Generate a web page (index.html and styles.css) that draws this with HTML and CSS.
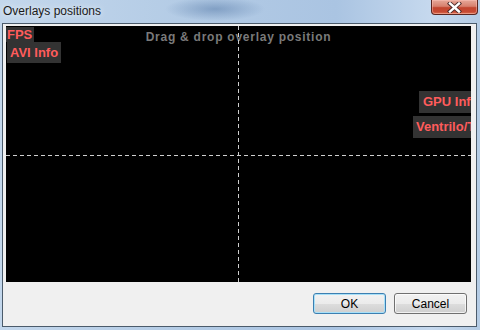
FILE: index.html
```html
<!DOCTYPE html>
<html lang="en">
  <head>
    <meta charset="UTF-8" />
    <title>Overlays positions</title>
    <link rel="stylesheet" href="styles.css">
  </head>
  <body>
    <div class="window">
      <div class="titlebar">
        <span class="title">Overlays positions</span>
        <button class="close">
          <svg width="17" height="11" viewBox="0 0 17 11">
            <path d="M4 1.5 L13 9.5 M13 1.5 L4 9.5" stroke="#4a2a2a" stroke-width="4.2" stroke-linecap="square" />
            <path d="M4 1.5 L13 9.5 M13 1.5 L4 9.5" stroke="#fff" stroke-width="2.4" stroke-linecap="square" />
          </svg>
        </button>
      </div>
      <div class="client">
        <div class="canvas">
          <div class="hint">Drag &amp; drop overlay position</div>
          <div class="axis axis-v"></div>
          <div class="axis axis-h"></div>
          <div class="overlay fps">FPS</div>
          <div class="overlay avi">AVI Info</div>
          <div class="overlay gpu">GPU Info</div>
          <div class="overlay vent">Ventrilo/TS</div>
        </div>
        <div class="buttons">
          <button class="btn default">OK</button>
          <button class="btn">Cancel</button>
        </div>
      </div>
    </div>
  </body>
</html>
```

FILE: styles.css
```css
html,
body {
  padding: 0;
  margin: 0;
  width: 480px;
  height: 330px;
  overflow: hidden;
}

.window {
  width: 480px;
  height: 330px;
  background:
    radial-gradient(ellipse 50px 12px at 215px 9px, rgba(90, 125, 170, 0.55), transparent),
    linear-gradient(to right, #c3d7ec 0%, #b3cbe5 40%, #aac4e2 70%, #c6d9ee 90%, #b4cbe4 100%);
  display: flex;
  flex-direction: column;
  font-family: "Liberation Sans", Arial, sans-serif;
}

.titlebar {
  height: 23px;
  display: flex;
  align-items: flex-start;
}

.title {
  padding: 4px 0 0 3px;
  font-size: 12px;
  line-height: 14px;
  color: #1a1a1a;
  text-shadow: 0 0 6px rgba(255, 255, 255, 0.9);
}

.close {
  margin-left: auto;
  margin-right: 2px;
  width: 47px;
  height: 15px;
  padding: 0;
  border: 1px solid #5a2620;
  border-top: none;
  border-radius: 0 0 4px 4px;
  background: linear-gradient(#e6a899 0%, #d7806e 45%, #c2452f 55%, #c74a33 85%, #e07a58 100%);
  box-shadow: inset 0 0 0 1px rgba(255, 200, 190, 0.45);
  display: flex;
  align-items: center;
  justify-content: center;
}

.client {
  margin: 0 3px 3px 2px;
  height: 302px;
  border: 1px solid #4b5b6b;
  background: #f0f0f0;
  display: flex;
  flex-direction: column;
}

.canvas {
  position: relative;
  margin: 2px 5px 0 3px;
  height: 256px;
  background: #000;
  overflow: hidden;
}

.hint {
  padding-top: 3px;
  text-align: center;
  font-size: 12px;
  font-weight: bold;
  letter-spacing: 0.75px;
  line-height: 16px;
  color: #7a7a7a;
}

.axis {
  position: absolute;
}

.axis-v {
  left: 232px;
  top: 0;
  bottom: 0;
  width: 1px;
  background: repeating-linear-gradient(to bottom, #cfcfcf 0 4px, transparent 4px 7px);
}

.axis-h {
  top: 129px;
  left: 0;
  right: 0;
  height: 1px;
  background: repeating-linear-gradient(to right, #cfcfcf 0 4px, transparent 4px 7px);
}

/* overlay boxes sit where the user dropped them, so they may run past the edge */
.overlay {
  position: absolute;
  background: #333;
  color: #ff5c5c;
  font-size: 13px;
  font-weight: bold;
  white-space: nowrap;
}

.fps {
  left: 0;
  top: 1px;
  width: 27px;
  height: 15px;
  line-height: 15px;
  padding-left: 1px;
}

.avi {
  left: 1px;
  top: 16px;
  width: 51px;
  height: 21px;
  line-height: 21px;
  padding-left: 3px;
}

.gpu {
  left: 413px;
  top: 65px;
  width: 60px;
  height: 22px;
  line-height: 22px;
  padding-left: 4px;
}

.vent {
  left: 407px;
  top: 90px;
  width: 76px;
  height: 22px;
  line-height: 22px;
  padding-left: 3px;
}

.buttons {
  display: flex;
  justify-content: flex-end;
  gap: 8px;
  margin-top: 11px;
  padding-right: 9px;
}

.btn {
  width: 73px;
  height: 21px;
  padding: 0;
  border: 1px solid #707070;
  border-radius: 3px;
  background: linear-gradient(#f2f2f2 0%, #ebebeb 50%, #dddddd 51%, #cfcfcf 100%);
  box-shadow: inset 0 0 0 1px rgba(255, 255, 255, 0.7);
  font-family: "Liberation Sans", Arial, sans-serif;
  font-size: 12px;
  color: #000;
}

.default {
  border-color: #3c7fb1;
  box-shadow: inset 0 0 0 1px #a8e0f8;
}
```
